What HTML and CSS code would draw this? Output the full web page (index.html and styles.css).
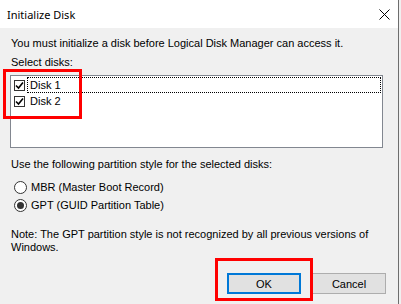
FILE: index.html
```html
<!DOCTYPE html>
<html lang="en">
<head>
  <meta charset="UTF-8" />
  <title>Initialize Disk</title>
  <link rel="stylesheet" href="styles.css">
</head>
<body>
  <div class="window">
    <div class="titlebar">
      <span class="title">Initialize Disk</span>
      <svg class="close" width="11" height="11" viewBox="0 0 11 11">
        <path d="M0.5 0.5 L10.5 10.5 M10.5 0.5 L0.5 10.5" stroke="#000" stroke-width="1" fill="none" />
      </svg>
    </div>

    <div class="content">
      <p class="intro">You must initialize a disk before Logical Disk Manager can access it.</p>
      <p class="label">Select disks:</p>

      <div class="listbox">
        <div class="item">
          <span class="check"><svg width="9" height="9" viewBox="0 0 9 9"><path d="M1 4.5 L3.5 7 L8 1.5" stroke="#000" stroke-width="1.6" fill="none" /></svg></span>
          <span class="item-text focused">Disk 1</span>
        </div>
        <div class="item">
          <span class="check"><svg width="9" height="9" viewBox="0 0 9 9"><path d="M1 4.5 L3.5 7 L8 1.5" stroke="#000" stroke-width="1.6" fill="none" /></svg></span>
          <span class="item-text">Disk 2</span>
        </div>
      </div>

      <p class="label style-label">Use the following partition style for the selected disks:</p>
      <div class="radio-row first">
        <span class="radio"></span>
        <span>MBR (Master Boot Record)</span>
      </div>
      <div class="radio-row">
        <span class="radio selected"></span>
        <span>GPT (GUID Partition Table)</span>
      </div>

      <p class="note">Note: The GPT partition style is not recognized by all previous versions of Windows.</p>

      <div class="buttons">
        <button class="btn default">OK</button>
        <button class="btn">Cancel</button>
      </div>
    </div>

    <div class="mark mark-disks"></div>
    <div class="mark mark-ok"></div>
  </div>
</body>
</html>
```

FILE: styles.css
```css
body {
  margin: 0;
  background: #f0f0f0;
  font-family: "Liberation Sans", Arial, sans-serif;
  font-size: 11px;
  color: #000;
}
.window {
  position: relative;
  width: 399px;
  height: 304px;
  box-sizing: border-box;
  border-right: 1px solid #6d6d6d;
  background: #f0f0f0;
}
.titlebar {
  height: 28px;
  background: #fff;
  display: flex;
  align-items: center;
  justify-content: space-between;
  padding: 0 8px 0 7px;
}
.title {
  font-family: "Noto Sans", "Open Sans", sans-serif;
  font-size: 11px;
  margin-top: 1px;
}
.close {
  margin-top: 1px;
}
.content {
  padding: 0 12px 0 11px;
}
p {
  margin: 0;
  line-height: 13px;
}
.intro {
  padding-top: 9px;
}
.label {
  margin-top: 6px;
}
.listbox {
  margin: 6px 0 0 -1px;
  width: 373px;
  height: 73px;
  box-sizing: border-box;
  border: 1px solid #828790;
  background: #fff;
  padding: 1px 1px 0 3px;
}
.item {
  height: 16px;
  display: flex;
  align-items: center;
  gap: 2px;
}
.item-text {
  flex: 1;
  height: 16px;
  line-height: 14px;
  box-sizing: border-box;
  padding-left: 2px;
  border: 1px solid transparent;
}
.item-text.focused {
  border: 1px dotted #000;
}
.check {
  width: 11px;
  height: 11px;
  box-sizing: border-box;
  border: 1px solid #333;
  background: #fff;
  display: flex;
  align-items: center;
  justify-content: center;
}
.style-label {
  margin-top: 10px;
}
.radio-row {
  display: flex;
  align-items: center;
  gap: 4px;
  height: 18px;
  margin-left: 3px;
}
.radio-row.first {
  margin-top: 7px;
}
.radio {
  width: 13px;
  height: 13px;
  box-sizing: border-box;
  border: 1px solid #333;
  border-radius: 50%;
  background: #fff;
  display: flex;
  align-items: center;
  justify-content: center;
}
.radio.selected::after {
  content: "";
  width: 7px;
  height: 7px;
  border-radius: 50%;
  background: #333;
}
.note {
  margin-top: 14px;
  width: 360px;
}
.buttons {
  display: flex;
  justify-content: flex-end;
  gap: 11px;
  margin-top: 19px;
}
.btn {
  width: 74px;
  height: 21px;
  box-sizing: border-box;
  border: 1px solid #adadad;
  background: #e1e1e1;
  font-family: "Liberation Sans", Arial, sans-serif;
  font-size: 11px;
  padding: 0;
}
.btn.default {
  border: 2px solid #0078d7;
}
.mark {
  position: absolute;
  border: 3px solid #f00;
  box-sizing: border-box;
}
.mark-disks {
  left: 3px;
  top: 69px;
  width: 79px;
  height: 50px;
}
.mark-ok {
  left: 215px;
  top: 258px;
  width: 98px;
  height: 43px;
}
```
